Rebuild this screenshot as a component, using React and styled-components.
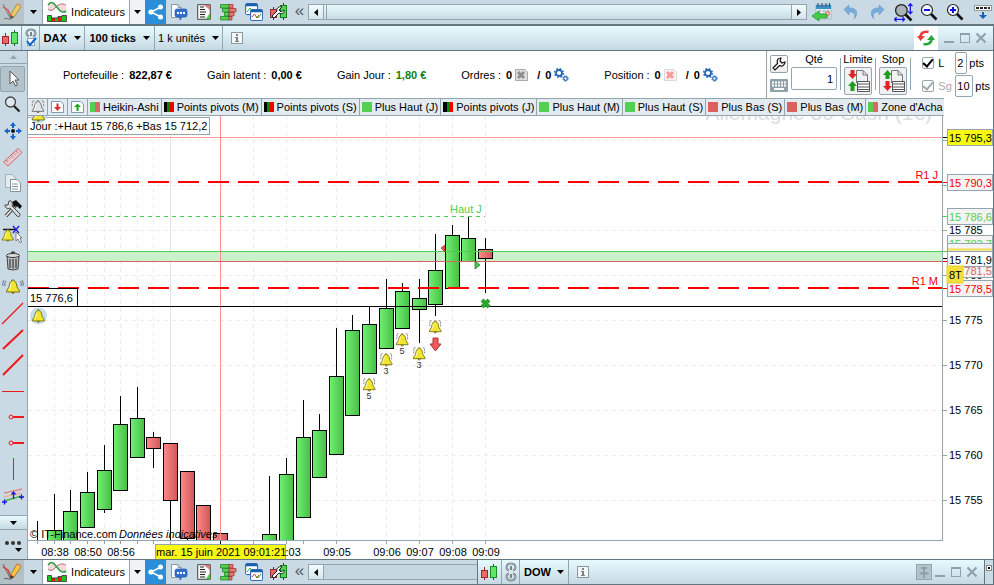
import styled, { createGlobalStyle } from "styled-components";

const GlobalStyle = createGlobalStyle`
  * { box-sizing: border-box; }
  body { margin: 0; background: #fff; }
  body, button, input, select {
    font-family: "Liberation Sans", Arial, sans-serif;
    font-size: 11px;
    color: #000;
  }
  svg { display: block; flex: none; }
`

const Page = styled.div`
  display: flex;
  flex-direction: column;
  min-height: 100vh;
  overflow: hidden;
`

/* ---------- barres ---------- */
const TopBar = styled.header`
  display: flex;
  height: 26px;
  background: #c9dae4;
  border-bottom: 2px solid #63757e;
`
const Strip = styled.div`
  display: flex;
  align-items: stretch;
  flex: ${(p) => (p.$grow ? "1 1 auto" : "0 1 477px")};
  min-width: 0;
  background: #c9dae4;
`
const ToolButton = styled.button`
  display: flex;
  align-items: center;
  justify-content: center;
  gap: 4px;
  flex: none;
  width: ${(p) => p.$w || 25}px;
  padding: 0;
  border: none;
  background: ${(p) => p.$bg || "transparent"};
  border-right: ${(p) => (p.$line ? "1px solid #93a5af" : "none")};
  cursor: pointer;

  &:hover { opacity: 0.8; }
`
const Chevrons = styled.button`
  width: 17px;
  padding: 0 0 3px;
  border: none;
  background: transparent;
  font-size: 17px;
  line-height: 20px;
  color: #4f5b62;
`
const Scroll = styled.div`
  display: flex;
  flex: 1;
  align-self: center;
  height: 16px;
  min-width: 0;
  border: 1px solid #93a5af;
  border-right-width: ${(p) => (p.$open ? 0 : 1)}px;
  background: ${(p) => (p.$open ? "#c4d6df" : "linear-gradient(#e8fafd, #c6dae2)")};
`
const ScrollButton = styled.button`
  display: flex;
  align-items: center;
  justify-content: center;
  width: 15px;
  padding: 0;
  border: none;
  border-${(p) => p.$side}: 1px solid #93a5af;
  background: linear-gradient(#f4fdff, #d5e4ea);
`
const ScrollTrack = styled.div`
  flex: 1;
  margin-left: ${(p) => (p.$open ? 0 : 2)}px;
  border-left: ${(p) => (p.$open ? "none" : "1px solid #93a5af")};
`
const RightTools = styled.div`
  display: flex;
  margin-left: 2px;
`

const WindowBar = styled.div`
  display: flex;
  flex: ${(p) => (p.$grow ? 1 : "none")};
  min-width: 0;
  height: 25px;
  background: linear-gradient(#e6fafe, #c6d9e3);
  border-bottom: 1px solid #63757e;
  border-right: 1px solid #63757e;
  border-left: ${(p) => (p.$grow ? "1px solid #63757e" : "none")};
`
const Cell = styled.label`
  display: flex;
  align-items: center;
  justify-content: center;
  gap: 6px;
  width: ${(p) => p.$w}px;
  border-right: 1px solid #93a5af;
`
const Picker = styled.select`
  appearance: none;
  border: none;
  padding: 0;
  background: transparent;
  font-weight: ${(p) => (p.$bold ? "bold" : "normal")};
`
const Spacer = styled.div`
  flex: 1;
`

/* ---------- corps ---------- */
const Body = styled.div`
  display: flex;
  flex: 1;
  border-right: 1px solid #63757e;
`
const Side = styled.nav`
  display: flex;
  flex-direction: column;
  flex: none;
  width: 28px;
  background: #c9dae4;
  border-right: 1px solid #93a5af;
`
const SideArrow = styled.button`
  display: flex;
  align-items: center;
  justify-content: center;
  height: ${(p) => p.$h}px;
  padding: 0;
  border: none;
  border-bottom: 1px solid #93a5af;
  border-top: ${(p) => (p.$top ? "1px solid #93a5af" : "none")};
  background: ${(p) => (p.$top ? "linear-gradient(#e8fafd, #c6dae2)" : "transparent")};
`
const SideList = styled.div`
  flex: 1;
  padding-top: 2px;
`
const SideButton = styled.button`
  display: flex;
  align-items: center;
  justify-content: center;
  width: 25px;
  height: 26px;
  padding: 0;
  border: 1px solid ${(p) => (p.$active ? "#93a5af" : "transparent")};
  border-radius: 2px;
  background: ${(p) => (p.$active ? "#b4c3cb" : "transparent")};
`
const MoreButton = styled(SideButton)`
  height: 29px;
`
const Main = styled.main`
  display: flex;
  flex-direction: column;
  flex: 1;
  min-width: 0;
`
const InfoBar = styled.section`
  display: flex;
  height: 47px;
  background: #fff;
`
const Infos = styled.div`
  display: flex;
  align-items: center;
  flex: 1;
  gap: 35px;
  padding-left: 35px;
  white-space: nowrap;
`
const Info = styled.div`
  display: flex;
  align-items: center;
  gap: 5px;
`
const Counter = styled.span`
  display: flex;
  align-items: center;
  gap: 3px;
`
const Value = styled.b`
  color: ${(p) => p.$color || "#000"};
`
const Slash = styled.b`
  margin-left: 4px;
`
const OrderPanel = styled.form`
  display: flex;
  gap: 3px;
  width: 227px;
  padding: 0 3px;
  border-left: 1px solid #93a5af;
`
const IconColumn = styled.div`
  display: flex;
  flex-direction: column;
  gap: 3px;
  padding-top: 4px;
`
const SmallButton = styled.button`
  display: flex;
  align-items: center;
  justify-content: center;
  width: 18px;
  height: 18px;
  padding: 0;
  border: ${(p) => (p.$flat ? "none" : "1px solid #93a5af")};
  border-radius: 2px;
  background: ${(p) => (p.$flat ? "none" : "linear-gradient(#fff, #eee)")};
`
const Field = styled.label`
  display: flex;
  flex-direction: column;
  align-items: center;
  gap: 1px;
  width: ${(p) => p.$w}px;
  padding-top: 2px;
  line-height: 13px;
`
const TextInput = styled.input`
  width: ${(p) => p.$w}px;
  height: ${(p) => p.$h}px;
  padding: 0 ${(p) => (p.$right ? 3 : 1)}px;
  border: 1px solid #93a5af;
  border-radius: 2px;
  background: #fff;
  text-align: ${(p) => (p.$right ? "right" : "left")};
`
const OrderButton = styled.button`
  display: flex;
  align-items: center;
  justify-content: center;
  width: 28px;
  height: 28px;
  padding: 0;
  border: 1px solid #93a5af;
  border-radius: 2px;
  background: #f0f1f2;
`
const Divider = styled.div`
  width: 1px;
  height: 32px;
  margin-top: 7px;
  background: #93a5af;
`
const Limits = styled.div`
  display: flex;
  flex-direction: column;
`
const LimitRow = styled.div`
  display: flex;
  align-items: center;
  height: 23px;
  gap: 2px;
`
const CheckLabel = styled.label`
  display: flex;
  align-items: center;
  gap: 4px;
  width: 31px;
  color: ${(p) => (p.$off ? "#a9a9a9" : "#000")};
`
const Check = styled.input`
  appearance: none;
  display: flex;
  flex: none;
  align-items: center;
  justify-content: center;
  width: 12px;
  height: 12px;
  margin: 0;
  border: 1px solid #93a5af;
  border-radius: 2px;
  background: #fff;

  &:checked::after {
    content: "";
    width: 4px;
    height: 8px;
    margin-bottom: 2px;
    border: solid ${(p) => (p.disabled ? "#a9a9a9" : "#000")};
    border-width: 0 2px 2px 0;
    transform: rotate(40deg);
  }
`

const TabBar = styled.div`
  display: flex;
  height: 18px;
  margin-right: 49px;
  overflow: hidden;
  background: #e3ebf0;
  border-top: 1px solid #93a5af;
  border-bottom: 1px solid #93a5af;
`
const Tab = styled.button`
  display: flex;
  align-items: center;
  flex: none;
  gap: 3px;
  padding: 0 2px;
  border: none;
  border-right: 1px solid #93a5af;
  background: transparent;
  white-space: nowrap;

  &:last-child { border-right: none; }
`
const TabIcon = styled(Tab)`
  justify-content: center;
  width: 20px;
`
const Swatch = styled.span`
  display: flex;
  width: 10px;
  height: 10px;
`
const SwatchPart = styled.span`
  flex: 1;
  background: ${(p) => p.$color};
`

const ChartGrid = styled.section`
  display: grid;
  flex: 1;
  grid-template-columns: 1fr 50px;
  grid-template-rows: 1fr 18px;
  min-height: 300px;
`
const Plot = styled.svg`
  width: 100%;
  height: 100%;
  min-height: 0;
  border-right: 1px solid #93a5af;
  border-bottom: 1px solid #93a5af;
  overflow: hidden;
`
const AxisSvg = styled.svg`
  width: 100%;
  height: 100%;
`

const BottomBar = styled.footer`
  display: flex;
  height: 26px;
  background: #c9dae4;
  border-top: 1px solid #63757e;
  border-bottom: 1px solid #63757e;
`
const Corner = styled.div`
  display: flex;
  justify-content: center;
  width: 9px;
  padding-top: 5px;
  border-right: 1px solid #63757e;
`
const WindowButtons = styled.div`
  display: flex;
  align-items: center;
  padding: 0 4px 0 3px;
`
const WindowButton = styled.button`
  display: flex;
  align-items: center;
  justify-content: center;
  width: 16px;
  height: 16px;
  padding: 0;
  border: ${(p) => (p.$pressed ? "1px solid #93a5af" : "none")};
  background: ${(p) => (p.$pressed ? "#b4c3cb" : "none")};
`

/* ---------- icones ---------- */
const Caret = ({ up, color = "#000" }) => (
  <svg width="7" height="4"><path d={up ? "M0 4L3.5 0L7 4Z" : "M0 0H7L3.5 4Z"} fill={color} /></svg>
)
const Play = ({ left }) => (
  <svg width="4" height="7"><path d={left ? "M4 0V7L0 3.5Z" : "M0 0V7L4 3.5Z"} fill="#000" /></svg>
)
const PencilIcon = () => (
  <svg width="20" height="20" viewBox="0 0 20 20" fill="none">
    <path d="M1 2L8 16" stroke="#666" />
    <path d="M1 5L6 8L9 15L18 3" stroke="#e03030" strokeWidth="1.4" />
    <path d="M2 17C5 15 8 19 10 16" stroke="#555" />
    <path d="M9 12L15 2L19 5L12 15L9 17Z" fill="#fbc540" stroke="#8d6c28" strokeWidth=".8" />
    <path d="M15 2L16 1L20 3L18.500 5Z" fill="#e78b8b" />
    <path d="M9 13L12 15L8.500 17Z" fill="#333" />
  </svg>
)
const IndicatorIcon = () => (
  <svg width="20" height="20" viewBox="0 0 20 20" fill="none">
    <path d="M1 7C4 10 6 8 9 5S15 1 19 3V9C16 12 13 10 10 6S4 -1 1 3Z" fill="#f3d9d9" />
    <path d="M1 7C4 10 6 8 9 5S15 1 19 3" stroke="#c06a6a" />
    <path d="M1 3C4 -1 6 0 9 4S15 12 19 9" stroke="#2f9f45" strokeWidth="1.600" />
    <path d="M1 14H4V19H1ZM8 16H11V19H8ZM15 14H19V19H15Z" fill="#18c818" />
    <path d="M4 16H8V19H4ZM11 15H15V19H11Z" fill="#e21b1b" />
    <path d="M.500 13.500H4.500V16H8H11V14.500H15V13.500H19.500V19.500H.500Z" stroke="#222" strokeWidth=".8" />
  </svg>
)
const ShareIcon = () => (
  <svg width="16" height="16" viewBox="0 0 16 16">
    <path d="M13 3L3 8L13 13" stroke="#fff" strokeWidth="1.500" fill="none" />
    <circle cx="3" cy="8" r="2.600" fill="#fff" /><circle cx="12.500" cy="3" r="2.500" fill="#fff" /><circle cx="12.500" cy="13" r="2.500" fill="#fff" />
  </svg>
)
const ChatIcon = () => (
  <svg width="18" height="18" viewBox="0 0 18 18">
    <path d="M1.500 1.500H8L11 4.500V14.500H1.500Z" fill="#fff" stroke="#8999a1" />
    <path d="M8 1.500V4.500H11" fill="none" stroke="#8999a1" />
    <path d="M7 6H15Q17 6 17 8V12Q17 14 15 14H12L10 17V14H7Q5 14 5 12V8Q5 6 7 6Z" fill="#356fc9" stroke="#2057ac" strokeWidth=".7" />
    <path d="M7 9H9V11H7ZM10 9H12V11H10ZM13 9H15V11H13Z" fill="#fff" />
  </svg>
)
const NewsIcon = () => (
  <svg width="14" height="16" viewBox="0 0 14 16">
    <path d="M.700.700H13.300V15.300H.700Z" fill="#f7f7f7" stroke="#444" />
    <path d="M3 3H7M3 5.500H8M3 8H9M3 10.500H8M3 13H8" stroke="#222" strokeWidth="1.200" />
    <path d="M7 1H13V6Z" fill="#e8717a" /><path d="M9 15L13 9V15Z" fill="#45cb45" />
  </svg>
)
const DepthIcon = () => (
  <svg width="17" height="17" viewBox="0 0 17 17" strokeWidth=".7">
    <path d="M.500.500H9V4H.500ZM2.500 4.500H9V8H2.500ZM4.500 8.500H9V12H4.500ZM.500 12.500H9V16H.500Z" fill="#4fd64f" stroke="#1d7a1d" />
    <path d="M9 .500H13V4H9ZM9 4.500H16V8H9ZM9 8.500H14V12H9ZM9 12.500H12V16H9Z" fill="#f07575" stroke="#9a2b2b" />
  </svg>
)
const WindowsIcon = () => (
  <svg width="18" height="18" viewBox="0 0 18 18" fill="none">
    <rect x=".6" y=".6" width="12" height="11" rx="1" fill="#fff" stroke="#1d5faf" /><path d="M1 2H12" stroke="#1d5faf" strokeWidth="2.500" />
    <path d="M2 9L5 5L7 8" stroke="#35ad35" />
    <rect x="5.600" y="6.600" width="12" height="11" rx="1" fill="#fff" stroke="#1d5faf" /><path d="M6 8H17" stroke="#1d5faf" strokeWidth="2.500" />
    <path d="M7 14L9.500 11L12 15L14 12" stroke="#d53434" /><path d="M10 12L13 15L16 11" stroke="#35ad35" />
  </svg>
)
const CandleWrenchIcon = () => (
  <svg width="17" height="18" viewBox="0 0 17 18">
    <path d="M3.500 4V17M13.500 0V17" stroke="#333" />
    <rect x=".5" y="6.500" width="6" height="8" fill="#e56464" stroke="#8c3030" />
    <rect x="10.500" y="2.500" width="6" height="12" fill="#51d851" stroke="#197c19" />
    <path d="M12 4L9 7L11 9L14 7C15 10 12 12 9 10L4 15L2 13L7 8C6 5 9 3 12 4Z" fill="#fff" stroke="#222" />
  </svg>
)
const CandlesIcon = () => (
  <svg width="17" height="17" viewBox="0 0 17 17">
    <path d="M3.500 3V16" stroke="#902626" /><rect x=".500" y="6.500" width="6" height="7" fill="#e96a6a" stroke="#a82525" />
    <path d="M12.500 0V16" stroke="#186018" /><rect x="9.500" y="2.500" width="6" height="11" fill="#5ee76a" stroke="#188c25" />
  </svg>
)
const LinkIcon = ({ checked }) => (
  <svg width="12" height="20" viewBox="0 0 12 20" fill="none">
    <path d="M4 8.500C0 7 1 1.500 6 1.500S12 7 8 8.500M6 4V8" stroke="#7b8489" strokeWidth="2" />
    <path d="M4 8.500C0 7 1 1.500 6 1.500S12 7 8 8.500" stroke="#b8c2c6" strokeWidth=".7" />
    {checked
      ? <><rect x="2.500" y="10.500" width="7" height="7" fill="#fff" stroke="#83a8cd" /><path d="M2 13L5 17L11 10" stroke="#155cc4" strokeWidth="2" /></>
      : <><path d="M4 11.500C0 13 1 18.500 6 18.500S12 13 8 11.500M6 12V16" stroke="#7b8489" strokeWidth="2" /><path d="M4 11.500C0 13 1 18.500 6 18.500S12 13 8 11.500" stroke="#b8c2c6" strokeWidth=".7" /></>}
  </svg>
)
const InfoIcon = () => (
  <svg width="12" height="12" viewBox="0 0 12 12">
    <rect x=".500" y=".500" width="11" height="11" fill="#f5f8f9" stroke="#8b999f" />
    <path d="M5 2H7V4H5ZM4 5H7V9H8V10H4V9H5V6H4Z" fill="#788388" />
  </svg>
)
const CalendarIcon = () => (
  <svg width="20" height="19" viewBox="0 0 20 19">
    <rect x="4" y="2" width="15" height="14" fill="#f4f8fb" stroke="#84a3b4" strokeWidth=".7" />
    <path d="M4 2H19V6H4Z" fill="#3b91c7" />
    <path d="M6 0V4M10 0V4M14 0V4M17.500 0V4" stroke="#446" />
    <path d="M5 8H18M5 11H18M5 14H18M8 6V16M12 6V16M16 6V16" stroke="#a9bfcb" />
    <rect x="14" y="9" width="3" height="3" fill="#fff" stroke="#e25151" />
    <path d="M0 13L7 8V11H15V15H7V18Z" fill="#42ce42" stroke="#258a25" strokeWidth=".7" />
  </svg>
)
const UndoIcon = ({ flip }) => (
  <svg width="16" height="16" viewBox="0 0 16 16">
    <g transform={flip ? "translate(16 0) scale(-1 1)" : undefined}>
      <path d="M1 5.500L6 1V4C14 3 16 10 11 15C13 10 11 8 6 8V11Z" fill="#77abd9" stroke="#6497c7" strokeWidth=".5" />
    </g>
  </svg>
)
const ZoomIcon = ({ kind, size = 18 }) => (
  <svg width={size} height={size} viewBox="0 0 18 18">
    <path d="M10 10L16.500 16.500" stroke="#111" strokeWidth="2.600" />
    <circle cx="7" cy="7" r="5.500" fill={kind === "fit" ? "#a9b4b9" : "#f3fafc"} stroke="#222" strokeWidth="1.200" />
    {(kind === "in" || kind === "out") && <path d="M4 7H10" stroke="#1212dd" strokeWidth="2" />}
    {kind === "in" && <path d="M7 4V10" stroke="#1212dd" strokeWidth="2" />}
    {kind === "fit" && <path d="M15.500 1V10M13.500 3L15.500 .7L17.500 3M13.500 8L15.500 10.300L17.500 8M0 15.500H10M2.500 13.500L.500 15.500L2.500 17.500M8 13.500L10 15.500L8 17.500" stroke="#1717df" strokeWidth="1.200" fill="none" />}
  </svg>
)
const KeysDownIcon = () => (
  <svg width="18" height="15" viewBox="0 0 18 15">
    <rect x=".500" y=".500" width="17" height="5" fill="#fff" stroke="#999" />
    <path d="M2 2H5V4H2ZM6 2H9V4H6ZM10 2H13V4H10ZM14 2H16V4H14Z" fill="#222" />
    <path d="M8 7H10V10H13L9 14L5 10H8Z" fill="#1761be" />
  </svg>
)
const RefreshIcon = () => (
  <svg width="18" height="18" viewBox="0 0 18 18">
    <path d="M3.500 8C3.500 4 7 2 11.500 3" fill="none" stroke="#e83c3c" strokeWidth="2.600" />
    <path d="M0 7H8L3.500 12Z" fill="#e83c3c" />
    <path d="M14.500 10C14.500 14 11 16 6.500 15" fill="none" stroke="#27a43a" strokeWidth="2.600" />
    <path d="M10 11H18L14.500 6Z" fill="#27a43a" />
  </svg>
)
const WinGlyph = ({ kind }) => (
  <svg width="12" height="12" viewBox="0 0 12 12" fill="none" stroke="#8ea0aa">
    {kind === "min" && <path d="M1 10H11" strokeWidth="2" />}
    {kind === "max" && <><rect x="1.500" y="1.500" width="9" height="9" /><path d="M1 2H11" strokeWidth="2" /></>}
    {kind === "close" && <path d="M1.500 1.500L10.500 10.500M10.500 1.500L1.500 10.500" strokeWidth="2" />}
    {kind === "pin" && <path d="M3 2H9M4 7H8M1.500 7.500H10.500M6 8V12M6 2V7" strokeWidth="2" />}
  </svg>
)
const CancelIcon = ({ red }) => (
  <svg width="13" height="12" viewBox="0 0 13 12">
    <path d="M.500.500H10L12.500 3V11.500H.500Z" fill={red ? "#fff0f0" : "#dedede"} stroke={red ? "#d5dce0" : "#a9a9a9"} />
    <path d="M3 3L9 9M9 3L3 9" stroke={red ? "#f69b9b" : "#8f8f8f"} strokeWidth="3" />
  </svg>
)
const GearsIcon = () => (
  <svg width="15" height="14" viewBox="0 0 15 14" fill="none">
    <circle cx="5" cy="5" r="4.300" stroke="#2467b8" strokeWidth="1.500" strokeDasharray="1.700 1.700" />
    <circle cx="5" cy="5" r="3" stroke="#2467b8" strokeWidth="1.800" />
    <circle cx="11.500" cy="10.500" r="2.700" stroke="#2467b8" strokeDasharray="1.100 1.100" />
    <circle cx="11.500" cy="10.500" r="1.800" stroke="#2467b8" strokeWidth="1.200" />
  </svg>
)
const WrenchIcon = () => (
  <svg width="14" height="14" viewBox="0 0 14 14">
    <path d="M9 1L8 4L10 6L13 5C13 8 10 10 7.500 8.500L3 13L1 11L5.500 6.500C4.500 3 6 1 9 1Z" fill="#fff" stroke="#111" strokeWidth="1.200" />
  </svg>
)
const KeyboardIcon = () => (
  <svg width="18" height="13" viewBox="0 0 18 13">
    <rect width="18" height="13" rx="1" fill="#8fa1ab" />
    <path d="M2 3.500H16M2 6.500H16" stroke="#fff" strokeWidth="2" strokeDasharray="2 1" /><path d="M4 10H14" stroke="#fff" strokeWidth="2" />
  </svg>
)
const OrderIcon = ({ stop }) => (
  <svg width="23" height="24" viewBox="0 0 23 24">
    <path d="M9.500 1.500H16L20.500 6V12M16 1.500V6H20.500M9.500 1.500V14" fill="none" stroke="#777" />
    <path d="M10.500 12.500H22.500V22.500H10.500ZM10 15H22M10 18H22M10 20.500H22" fill="#fff" stroke="#555" />
    <path d={stop ? "M3.500 12H7.500V17H10L5.500 22L1 17H3.500Z" : "M3.500 1H7.500V5H10L5.500 10L1 5H3.500Z"} fill="#e02525" />
    <path d={stop ? "M3.500 10H7.500V6H10L5.500 1L1 6H3.500Z" : "M3.500 22H7.500V17H10L5.500 12L1 17H3.500Z"} fill="#1d9e1d" />
  </svg>
)
const BellShape = ({ fill = "#f1e62d", line = "#6b6410" }) => (
  <>
    <path d="M7 2V1H9V2C11.500 3 11.500 5 12 8L14.500 12V13H1.500V12L4 8C4.500 5 4.500 3 7 2Z" fill={fill} stroke={line} strokeWidth=".9" />
    <path d="M6.500 13.500Q8 16 9.500 13.500Z" fill={fill} stroke={line} strokeWidth=".8" />
    <path d="M6 4.500C5.500 7 5 9 4 11" stroke="#fff" strokeWidth="1" fill="none" opacity=".8" />
  </>
)
const BellIcon = ({ gray, w = 18 }) => (
  <svg width={w} height="14" viewBox="0 0 16 16">
    <BellShape fill={gray ? "#e2e5e7" : "#f4e827"} line={gray ? "#555" : "#6f6817"} />
    <path d="M4 1H1.500V8M12 1H14.500V8" stroke="#777" strokeDasharray="2 1" fill="none" />
  </svg>
)
const ArrowPageIcon = ({ up }) => (
  <svg width="13" height="12" viewBox="0 0 13 12">
    <path d="M.500.500H9.500L12.500 3V11.500H.500Z" fill="#fff" stroke="#7c9bb5" />
    <path d={up ? "M5.500 10V6H3L6.500 2.500L10 6H7.500V10Z" : "M5.500 2.500V6H3L6.500 10L10 6H7.500V2.500Z"} fill={up ? "#1ba51b" : "#e02b2b"} />
  </svg>
)

const sideIcons = {
  "Curseur": <path d="M9 4L9 17L12 14L14.500 19L16.500 18L14 13H18Z" fill="#fff" stroke="#555" />,
  "Loupe": <><circle cx="9.500" cy="9" r="5" fill="#dce8ee" stroke="#444" strokeWidth="1.300" /><path d="M13 13L18.500 18.500" stroke="#222" strokeWidth="2.200" /></>,
  "Déplacer": <><path d="M12 3L15 7H13V9H11V7H9ZM12 21L9 17H11V15H13V17H15ZM3 12L7 9V11H9V13H7V15ZM21 12L17 15V13H15V11H17V9Z" fill="#1765c9" /><circle cx="12" cy="12" r="2" fill="#111" /></>,
  "Règle": <path d="M2.500 17L17 3.500L21 7.500L7 21ZM5 15L7 17M7.500 12.500L9 14M10 10.500L12 12.500M12.500 8L14 9.500M15 6L17 8" fill="#dfcbd1" stroke="#d66868" />,
  "Copier": <><path d="M4.500 3.500H11L14.500 7V16.500H4.500Z" fill="#e3ebef" stroke="#a3b1b8" /><path d="M9.500 8.500H16L19.500 12V20.500H9.500Z" fill="#fff" stroke="#83939b" /><path d="M11 13H17M11 15.500H17M11 18H17" stroke="#83939b" /></>,
  "Outils": <><path d="M5 19L15 8" stroke="#444" strokeWidth="3.500" /><path d="M5 19L15 8" stroke="#eee" strokeWidth="1.500" /><path d="M11 5L15 3L21 9L19 12L16 9L13 10Z" fill="#111" /><path d="M8 4L7 8L4 8C4 12 8 12 9 11L16 19Q19 21 19 17L11 9C12 5 10 3 8 4Z" fill="#d7dbdd" stroke="#444" /></>,
  "Alerte ligne": <><path d="M2 6.500H14" stroke="#111" strokeWidth="1.500" /><g transform="translate(0 6) scale(.85)"><BellShape /></g><path d="M12 3L18 10M18 3L12 10" stroke="#1717df" strokeWidth="1.300" /><path d="M15 9V18L17 16L19 20L20.500 19L19 15H21Z" fill="#fff" stroke="#666" strokeWidth=".8" /></>,
  "Supprimer": <><path d="M6 7H18L17 20Q12 22 7 20Z" fill="#b9bec0" stroke="#444" /><ellipse cx="12" cy="6.500" rx="6.500" ry="2" fill="#ddd" stroke="#333" /><path d="M10 4Q12 2 14 4M9 10V19M12 10V19.500M15 10V19" fill="none" stroke="#444" strokeWidth="1.300" /></>,
  "Alertes": <g transform="translate(4 4)"><BellShape /><path d="M1 2Q-1 4 0 7M-1 1Q-3 4 -2 7M15 2Q17 4 16 7M17 1Q19 4 18 7" stroke="#557" strokeWidth=".8" fill="none" /></g>,
  "Ligne": <path d="M1 23L22 2" stroke="#f01818" strokeWidth="1.300" />,
  "Segment": <path d="M2 22L22 3" stroke="#f01818" strokeWidth="2" />,
  "Demi-droite": <path d="M2 22L22 2" stroke="#f01818" strokeWidth="2" />,
  "Horizontale": <path d="M1 12.500H23" stroke="#f01818" />,
  "Rayon": <><circle cx="10" cy="12" r="2" fill="none" stroke="#f01818" /><path d="M12 12H23" stroke="#f01818" strokeWidth="2" /></>,
  "Rayon fin": <><circle cx="10" cy="12" r="2" fill="none" stroke="#f01818" /><path d="M12 12H23" stroke="#f01818" strokeWidth="2" /></>,
  "Verticale": <path d="M12.500 1V23" stroke="#f01818" />,
  "Canal": <><path d="M3 11L20 6V14L3 18Z" fill="#d9cfd6" /><path d="M3 10L21 6" stroke="#e06868" /><path d="M3 14L21 10" stroke="#e6a65b" strokeDasharray="2 1" /><path d="M3 18L21 13" stroke="#3fb84b" strokeWidth="1.500" /><path d="M1 19H6M3.500 16.500V21.500M18 14H23M20.500 11.500V16.500M12.500 16V9M10.500 11.500L12.500 9L14.500 11.500" stroke="#1717df" strokeWidth="1.300" fill="none" /></>,
}

/* ---------- donnees du graphique ---------- */
// x, haut, corps haut, corps bas, bas, couleur
const candles = [
  [9, 405, 428, 440, 440, "g"],
  [26, 378, 414, 440, 440, "g"],
  [42, 374, 395, 440, 440, "g"],
  [59, 356, 376, 411, 411, "g"],
  [76, 329, 354, 393, 397, "g"],
  [92, 280, 308, 374, 374, "g"],
  [109, 271, 302, 341, 341, "g"],
  [125, 316, 321, 332, 352, "r"],
  [142, 327, 327, 384, 440, "r"],
  [159, 355, 355, 422, 440, "r"],
  [175, 389, 389, 440, 440, "r"],
  [192, 417, 417, 440, 440, "r"],
  [241, 360, 418, 440, 440, "g"],
  [258, 342, 358, 440, 440, "g"],
  [275, 284, 321, 401, 401, "g"],
  [291, 298, 314, 361, 361, "g"],
  [308, 212, 260, 338, 338, "g"],
  [324, 199, 214, 299, 299, "g"],
  [341, 190, 208, 257, 257, "g"],
  [358, 163, 192, 232, 232, "g"],
  [374, 167, 175, 212, 212, "g"],
  [391, 163, 182, 193, 227, "g"],
  [407, 118, 154, 188, 200, "g"],
  [424, 109, 119, 172, 172, "g"],
  [440, 101, 122, 145, 145, "g"],
  [457, 122, 133, 142, 177, "r"],
]
const alerts = [[341, 269, "5"], [358, 244, "3"], [374, 224, "5"], [391, 238, "3"], [407, 211, ""]]
const gridX = [26, 42, 59, 76, 92, 109, 125, 225, 258, 308, 358, 391, 424, 457]
const gridY = [24, 69, 114, 159, 204, 249, 294, 339, 384]
const prices = [["15 785", 114], ["15 780", 159], ["15 775", 204], ["15 770", 249], ["15 765", 294], ["15 760", 339], ["15 755", 384]]
const times = [["08:38", 27], ["08:50", 60], ["08:56", 93], ["09:03", 259], ["09:05", 309], ["09:06", 359], ["09:07", 392], ["09:08", 425], ["09:09", 458]]
const timeTicks = [9, 26, 42, 59, 76, 92, 109, 125, 142, 225, 258, 275, 308, 358, 391, 424, 457]

const tabs = [
  ["Heikin-Ashi", ["#53cf53", "#dc6666"]],
  ["Points pivots (M)", ["#000", "#008a00", "#f00000"]],
  ["Points pivots (S)", ["#000", "#008a00", "#f00000"]],
  ["Plus Haut (J)", ["#53cf53"]],
  ["Points pivots (J)", ["#000", "#008a00", "#f00000"]],
  ["Plus Haut (M)", ["#53cf53"]],
  ["Plus Haut (S)", ["#53cf53"]],
  ["Plus Bas (S)", ["#dc6060"]],
  ["Plus Bas (M)", ["#dc6060"]],
  ["Zone d'Acha", ["#53cf53", "#dc6666"]],
]

const Candle = ({ data }) => {
  const [x, high, top, bottom, low, color] = data
  return (
    <g stroke="#000" shapeRendering="crispEdges">
      <path d={`M${x + 0.5} ${high}V${low}`} />
      {x !== 9 && <rect x={x - 6.5} y={top + 0.5} width="14" height={bottom - top} fill={`url(#${color})`} />}
    </g>
  )
}

const HaloBell = ({ y }) => (
  <g transform={`translate(2 ${y})`}>
    <circle cx="8.500" cy="8" r="8.500" fill="#c5dfe9" />
    <g transform="translate(1 1) scale(.92)"><BellShape /></g>
  </g>
)

const PriceChart = () => (
  <Plot fontSize="11">
    <defs>
      <linearGradient id="g"><stop stopColor="#72f072" /><stop offset="1" stopColor="#45bf45" /></linearGradient>
      <linearGradient id="r"><stop stopColor="#ff8a8a" /><stop offset="1" stopColor="#cf5757" /></linearGradient>
    </defs>
    <g stroke="#ececec" strokeDasharray="4 4" shapeRendering="crispEdges">
      {gridX.map((x) => <line key={x} x1={x + 0.5} x2={x + 0.5} y1="0" y2="100%" />)}
      {gridY.map((y) => <line key={y} x1="0" x2="100%" y1={y + 0.5} y2={y + 0.5} />)}
    </g>
    <line x1="142.500" x2="142.500" y1="0" y2="100%" stroke="#e4e4e4" />
    <svg x="100%" overflow="visible">
      <text x="-10" y="4" textAnchor="end" fontSize="21" fill="#dedede">Allemagne 30 Cash (1€)</text>
    </svg>
    <rect x="0" y="135" width="100%" height="10" fill="#caf2ca" />
    {candles.map((c) => <Candle key={c[0]} data={c} />)}
    <g shapeRendering="crispEdges">
      <line x1="0" x2="100%" y1="21.500" y2="21.500" stroke="#ff9b9b" />
      <line x1="192.500" x2="192.500" y1="0" y2="100%" stroke="#ff8c8c" />
      <line x1="0" x2="100%" y1="66" y2="66" stroke="#ff0000" strokeWidth="2" strokeDasharray="21 9" />
      <line x1="0" x2="457" y1="100.500" y2="100.500" stroke="#46cc46" strokeDasharray="4 4" />
      <line x1="0" x2="100%" y1="135.500" y2="135.500" stroke="#4fcf4f" />
      <line x1="0" x2="100%" y1="145.500" y2="145.500" stroke="#d86565" />
      <line x1="0" x2="100%" y1="172" y2="172" stroke="#ff0000" strokeWidth="2" strokeDasharray="21 9" />
      <line x1="0" x2="100%" y1="190.500" y2="190.500" stroke="#000" />
    </g>
    <svg x="100%" overflow="visible">
      <text x="-4" y="63" textAnchor="end" fill="#e80010">R1 J</text>
      <text x="-4" y="169" textAnchor="end" fill="#e80010">R1 M</text>
    </svg>
    <text x="422" y="97" fill="#4fcf4f">Haut J</text>
    <path d="M413 132L417 129V136Z" fill="#e55" stroke="#a22" strokeWidth=".7" />
    <path d="M447 145L452 149L447 153Z" fill="#3fca4f" stroke="#1b6b22" strokeWidth=".7" />
    <path d="M454 184L461 191M461 184L454 191" stroke="#2fa52f" strokeWidth="4" />
    {alerts.map(([x, y, n]) => (
      <g key={x}>
        <g transform={`translate(${x - 7} ${y - 7}) scale(.9)`}>
          <BellShape />
          <path d="M4 1H2V7M12 1H14V7" stroke="#777" strokeDasharray="2 1" fill="none" />
        </g>
        <text x={x} y={y + 14} textAnchor="middle" fontSize="9" fill="#333">{n}</text>
      </g>
    ))}
    <path d="M405 222H410V228H413L407.500 235L402 228H405Z" fill="#ee5b5b" stroke="#b03232" />
    <rect x="-.500" y="1.500" width="182" height="17" fill="#fff" stroke="#93a5af" />
    <HaloBell y={-9} />
    <text x="2" y="14">Jour :+Haut 15 786,6 +Bas 15 712,2</text>
    <rect x="-.500" y="172.500" width="50" height="18" fill="#fff" stroke="#000" />
    <text x="2" y="186">15 776,6</text>
    <HaloBell y={192} />
    <text x="2" y="422">© IT-Finance.com <tspan x="91" fontStyle="italic">Données indicatives</tspan></text>
  </Plot>
)

const PriceTag = ({ y, text, color = "#000", bg = "#f4f4f4", h = 17 }) => (
  <g>
    <rect x="4.500" y={y + 0.5} width="45" height={h - 1} fill={bg} stroke="#93a5af" />
    <text x="6" y={y + 13} fill={color}>{text}</text>
  </g>
)

const PriceAxis = () => (
  <AxisSvg fontSize="11">
    {gridY.map((y) => <path key={y} d={`M0 ${y + 0.5}H4`} stroke="#93a5af" />)}
    <path d="M0 21.500H4M0 142.500H4" stroke="#000" />
    <path d="M0 66.500H4M0 172.500H4M0 145.500H4" stroke="#f40000" />
    <path d="M0 100.500H4M0 135.500H4" stroke="#4fcf4f" />
    {prices.map(([text, y]) => <text key={text} x="6" y={y + 4}>{text}</text>)}
    <PriceTag y={13} text="15 795,3" bg="#f8f813" />
    <PriceTag y={58} text="15 790,3" color="#f40000" />
    <PriceTag y={92} text="15 786,6" color="#53cf53" />
    <PriceTag y={119} text="15 782,7" color="#53cf53" />
    <PriceTag y={127} text="" />
    <path d="M5 133.500H49" stroke="#f2dc48" strokeWidth="2" />
    <g>
      <rect x="4.500" y="149.500" width="45" height="12" fill="#f4f4f4" stroke="#93a5af" />
      <text x="6" y="159" fill="#d86565">15 781,5</text>
    </g>
    <PriceTag y={135} text="15 781,9" bg="#fff" h={16} />
    <PriceTag y={164} text="15 778,5" color="#f40000" />
    <rect x="4" y="150" width="16" height="17" fill="#f5df3c" stroke="#e8d12c" />
    <text x="6" y="163">8T</text>
  </AxisSvg>
)

const TimeAxis = () => (
  <AxisSvg fontSize="11">
    {timeTicks.map((x) => <path key={x} d={`M${x + 0.5} 0V3`} stroke="#93a5af" />)}
    {times.map(([text, x]) => <text key={text} x={x} y="15" textAnchor="middle">{text}</text>)}
    <path d="M192.500 0V3" stroke="#000" />
    <rect x="127.500" y="3.500" width="130" height="15" fill="#f8f813" stroke="#93a5af" />
    <text x="128" y="15">mar. 15 juin 2021 09:01:21</text>
  </AxisSvg>
)

const ToolStrip = ({ children, open }) => (
  <Strip $grow={!open}>
    <ToolButton $w={24} $bg="#b3c0c6" aria-label="Dessin"><PencilIcon /></ToolButton>
    <ToolButton $w={19} $line aria-label="Options de dessin"><Caret /></ToolButton>
    <ToolButton $w={87} $bg="#fff" $line><IndicatorIcon />Indicateurs</ToolButton>
    <ToolButton $w={15} $bg="#eff3f5" aria-label="Liste des indicateurs"><Caret /></ToolButton>
    <ToolButton $w={21} $bg="#2b8fd8" aria-label="Partager"><ShareIcon /></ToolButton>
    <ToolButton aria-label="Messages"><ChatIcon /></ToolButton>
    <ToolButton aria-label="Actualités"><NewsIcon /></ToolButton>
    <ToolButton aria-label="Carnet"><DepthIcon /></ToolButton>
    <ToolButton aria-label="Fenêtres"><WindowsIcon /></ToolButton>
    <ToolButton aria-label="Réglages"><CandleWrenchIcon /></ToolButton>
    <Chevrons aria-label="Réduire">«</Chevrons>
    <Scroll $open={open}>
      <ScrollButton $side="right" aria-label="Gauche"><Play left /></ScrollButton>
      <ScrollTrack $open={open} />
      {!open && <ScrollButton $side="left" aria-label="Droite"><Play /></ScrollButton>}
    </Scroll>
    {children}
  </Strip>
)

const Dropdown = ({ name, value, w, bold }) => (
  <Cell $w={w}>
    <Picker $bold={bold} aria-label={name} defaultValue={value}><option>{value}</option></Picker>
    <Caret />
  </Cell>
)

const App = () => {
  return (
    <Page>
      <GlobalStyle />
      <TopBar>
        <ToolStrip>
          <RightTools>
            <ToolButton $w={26} aria-label="Calendrier"><CalendarIcon /></ToolButton>
            <ToolButton $w={32} aria-label="Annuler"><UndoIcon /></ToolButton>
            <ToolButton $w={20} aria-label="Rétablir"><UndoIcon flip /></ToolButton>
            <ToolButton $w={32} aria-label="Ajuster"><ZoomIcon kind="fit" size={19} /></ToolButton>
            <ToolButton $w={20} aria-label="Zoom arrière"><ZoomIcon kind="out" /></ToolButton>
            <ToolButton $w={32} aria-label="Zoom avant"><ZoomIcon kind="in" /></ToolButton>
            <ToolButton $w={23} aria-label="Afficher"><KeysDownIcon /></ToolButton>
          </RightTools>
        </ToolStrip>
      </TopBar>

      <WindowBar>
        <ToolButton $w={22} $line aria-label="Graphique"><CandlesIcon /></ToolButton>
        <ToolButton $w={18} $line aria-label="Lier"><LinkIcon checked /></ToolButton>
        <Dropdown name="Valeur" value="DAX" w={45} bold />
        <Dropdown name="Période" value="100 ticks" w={70} bold />
        <Dropdown name="Unités" value="1 k unités" w={68} />
        <ToolButton $w={27} aria-label="Informations"><InfoIcon /></ToolButton>
        <Spacer />
        <ToolButton $w={24} $bg="#fff" aria-label="Actualiser"><RefreshIcon /></ToolButton>
        <WindowButtons>
          <WindowButton aria-label="Minimiser"><WinGlyph kind="min" /></WindowButton>
          <WindowButton aria-label="Agrandir"><WinGlyph kind="max" /></WindowButton>
          <WindowButton aria-label="Fermer"><WinGlyph kind="close" /></WindowButton>
        </WindowButtons>
      </WindowBar>

      <Body>
        <Side>
          <SideArrow $h={13} aria-label="Monter"><Caret up color="#93a5af" /></SideArrow>
          <SideList>
            {Object.keys(sideIcons).map((name, i) => (
              <SideButton key={name} aria-label={name} $active={i === 0}>
                <svg width="24" height="24" viewBox="0 0 24 24">{sideIcons[name]}</svg>
              </SideButton>
            ))}
          </SideList>
          <SideArrow $h={15} $top aria-label="Descendre"><Caret /></SideArrow>
          <MoreButton aria-label="Plus">
            <svg width="20" height="14"><circle cx="4" cy="5" r="2" fill="#333" /><circle cx="10" cy="5" r="2" fill="#333" /><circle cx="16" cy="5" r="2" fill="#333" /><path d="M12 10H19L15.500 14Z" /></svg>
          </MoreButton>
        </Side>

        <Main>
          <InfoBar>
            <Infos>
              <Info>Portefeuille : <Value>822,87 €</Value></Info>
              <Info>Gain latent : <Value>0,00 €</Value></Info>
              <Info>Gain Jour : <Value $color="#128012">1,80 €</Value></Info>
              <Info>
                Ordres :
                <Counter><Value>0</Value><CancelIcon /></Counter>
                <Slash>/</Slash>
                <Counter><Value>0</Value><GearsIcon /></Counter>
              </Info>
              <Info>
                Position :
                <Counter><Value>0</Value><CancelIcon red /></Counter>
                <Slash>/</Slash>
                <Counter><Value>0</Value><GearsIcon /></Counter>
              </Info>
            </Infos>
            <OrderPanel onSubmit={(e) => e.preventDefault()}>
              <IconColumn>
                <SmallButton type="button" aria-label="Paramètres"><WrenchIcon /></SmallButton>
                <SmallButton type="button" $flat aria-label="Clavier"><KeyboardIcon /></SmallButton>
              </IconColumn>
              <Field $w={46}>Qté<TextInput $w={46} $h={23} $right defaultValue="1" /></Field>
              <Divider />
              <Field as="div" $w={28}>Limite<OrderButton type="button" aria-label="Limite"><OrderIcon /></OrderButton></Field>
              <Divider />
              <Field as="div" $w={28}>Stop<OrderButton type="button" aria-label="Stop"><OrderIcon stop /></OrderButton></Field>
              <Divider />
              <Spacer />
              <Limits>
                <LimitRow>
                  <CheckLabel><Check type="checkbox" defaultChecked />L</CheckLabel>
                  <TextInput $w={12} $h={22} defaultValue="2" aria-label="Limite en points" />pts
                </LimitRow>
                <LimitRow>
                  <CheckLabel $off><Check type="checkbox" defaultChecked disabled />Sg</CheckLabel>
                  <TextInput $w={18} $h={22} defaultValue="10" aria-label="Stop en points" />pts
                </LimitRow>
              </Limits>
            </OrderPanel>
          </InfoBar>

          <TabBar>
            <TabIcon aria-label="Alertes"><BellIcon gray w={14} /></TabIcon>
            <TabIcon aria-label="Vendre"><ArrowPageIcon /></TabIcon>
            <TabIcon aria-label="Acheter"><ArrowPageIcon up /></TabIcon>
            {tabs.map(([name, colors]) => (
              <Tab key={name}>
                <Swatch>{colors.map((c) => <SwatchPart key={c} $color={c} />)}</Swatch>
                {name}
              </Tab>
            ))}
          </TabBar>

          <ChartGrid>
            <PriceChart />
            <PriceAxis />
            <TimeAxis />
          </ChartGrid>
        </Main>
      </Body>

      <BottomBar>
        <ToolStrip open />
        <WindowBar $grow>
          <ToolButton $w={24} $line aria-label="Graphique"><CandlesIcon /></ToolButton>
          <ToolButton $w={18} $line aria-label="Lier"><LinkIcon /></ToolButton>
          <Dropdown name="Valeur" value="DOW" w={49} bold />
          <ToolButton $w={27} aria-label="Informations"><InfoIcon /></ToolButton>
          <Spacer />
          <WindowButtons>
            <WindowButton $pressed aria-label="Épingler"><WinGlyph kind="pin" /></WindowButton>
            <WindowButton aria-label="Minimiser"><WinGlyph kind="min" /></WindowButton>
            <WindowButton aria-label="Agrandir"><WinGlyph kind="max" /></WindowButton>
            <WindowButton aria-label="Fermer"><WinGlyph kind="close" /></WindowButton>
          </WindowButtons>
        </WindowBar>
        <Corner>
          <svg width="6" height="6"><rect x=".500" y=".500" width="5" height="5" fill="#fff" stroke="#888" /><rect x="2" y="2" width="2" height="2" /></svg>
        </Corner>
      </BottomBar>
    </Page>
  );
};

export default App;
